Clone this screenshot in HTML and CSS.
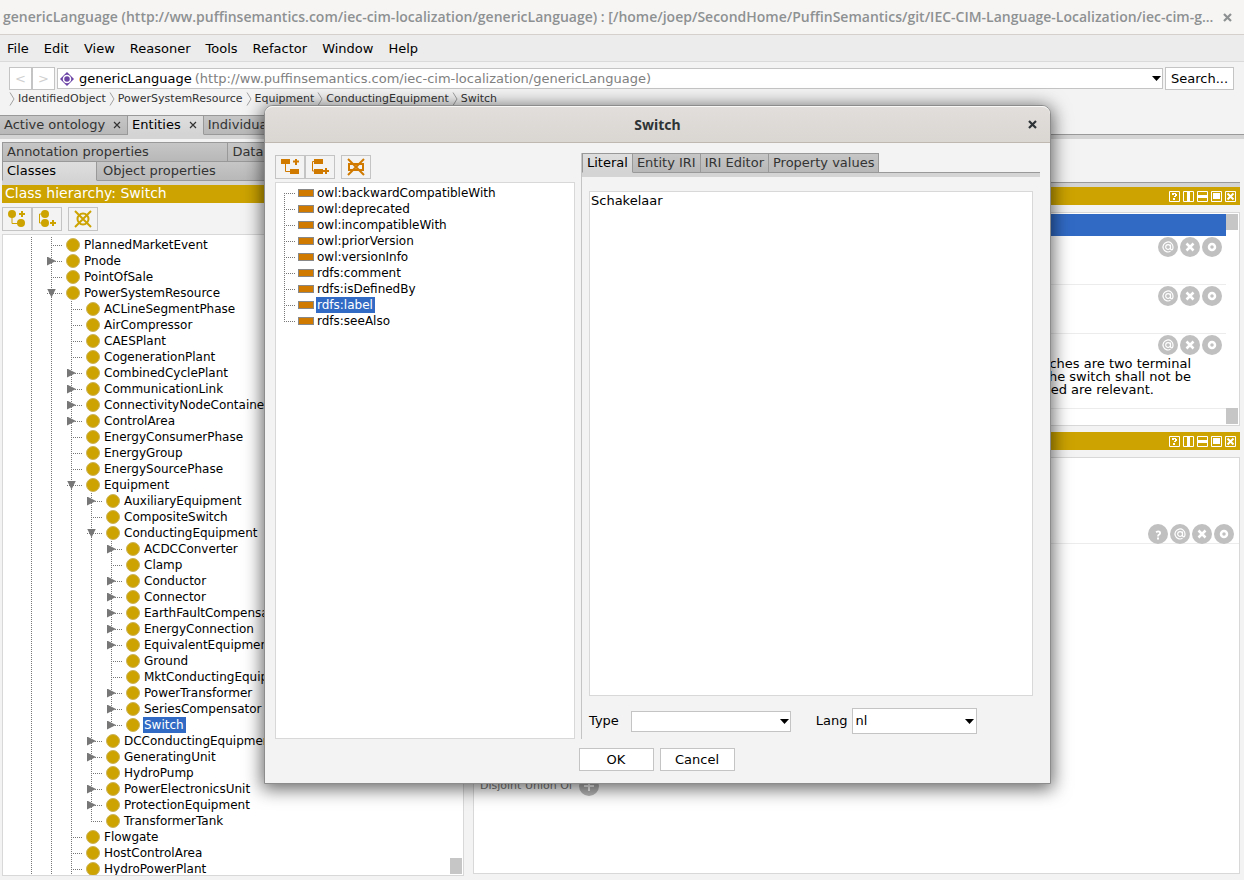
FILE: index.html
```html
<!DOCTYPE html>
<html lang="en">
<head>
    <meta charset="utf-8">
    <title>genericLanguage</title>
    <link rel="stylesheet" href="styles.css">
</head>
<body>
    <!-- shared icons -->
    <svg class="sprite" width="0" height="0">
        <symbol id="help" viewBox="0 0 11 11"><path d="M.5.5h10v10H.5z" fill="none" stroke="#fff"/><path d="M3 2h4v1h1v2H7v1H5V5h1V3H5v1H3zM4 7h2v2H4z" fill="#fff"/></symbol>
        <symbol id="split-v" viewBox="0 0 11 11"><path d="M.5.5h10v10H.5z" fill="none" stroke="#fff"/><path d="M4 0h3v11H4z" fill="#fff"/></symbol>
        <symbol id="split-h" viewBox="0 0 11 11"><path d="M.5.5h10v10H.5z" fill="none" stroke="#fff"/><path d="M0 4h11v3H0z" fill="#fff"/></symbol>
        <symbol id="float" viewBox="0 0 11 11"><path d="M.5.5h10v10H.5z" fill="none" stroke="#fff"/><path d="M2 2h7v6H2z" fill="#fff"/></symbol>
        <symbol id="shut" viewBox="0 0 11 11"><path d="M.5.5h10v10H.5z" fill="none" stroke="#fff"/><path d="M2.500 2.500l6 6M8.500 2.500l-6 6" stroke="#fff" stroke-width="2"/></symbol>
        <symbol id="r-at" viewBox="0 0 20 20"><circle cx="10" cy="10" r="10" fill="#c0c0c0"/><path d="M12.500 7.500v4q0 1.300 1.200 1.300 1.300 0 1.300-2.800A5 5 0 1 0 12.500 14.300M12.500 10a2.400 2.400 0 1 1-4.800 0 2.400 2.400 0 0 1 4.800 0z" fill="none" stroke="#fff" stroke-width="1.200"/></symbol>
        <symbol id="r-x" viewBox="0 0 20 20"><circle cx="10" cy="10" r="10" fill="#c0c0c0"/><path d="M6.500 6.500l7 7M13.500 6.500l-7 7" stroke="#fff" stroke-width="2.500"/></symbol>
        <symbol id="r-o" viewBox="0 0 20 20"><circle cx="10" cy="10" r="10" fill="#c0c0c0"/><circle cx="10" cy="10" r="3" fill="none" stroke="#fff" stroke-width="2.500"/></symbol>
        <symbol id="r-q" viewBox="0 0 20 20"><circle cx="10" cy="10" r="10" fill="#c0c0c0"/><path d="M8 8.200q2.500-1.500 3.800-.2 1 1.700-1 2.800-.8.600-.8 1.700" fill="none" stroke="#fff" stroke-width="1.800"/><path d="M9 13.500h2v2H9z" fill="#fff"/></symbol>
        <symbol id="r-plus" viewBox="0 0 20 20"><circle cx="10" cy="10" r="10" fill="#b8b8b8"/><path d="M10 5v10M5 10h10" stroke="#fff" stroke-width="2"/></symbol>
        <symbol id="chevron" viewBox="0 0 6 14"><path d="M1 .5l4 6.500-4 6.500" fill="none" stroke="#a0a0a0"/></symbol>
        <symbol id="cross" viewBox="0 0 9 9"><path d="M1 1l7 7M8 1L1 8" stroke="currentColor" stroke-width="2.200"/></symbol>
        <symbol id="cross-thin" viewBox="0 0 8 8"><path d="M1 1l6 6M7 1L1 7" stroke="#333" stroke-width="1.200"/></symbol>
    </svg>

    <header class="titlebar">
        <h1>genericLanguage (http://ww.puffinsemantics.com/iec-cim-localization/genericLanguage) : [/home/joep/SecondHome/PuffinSemantics/git/IEC-CIM-Language-Localization/iec-cim-g...</h1>
        <button class="win-close" aria-label="Close window"><svg width="9" height="9"><use href="#cross"/></svg></button>
    </header>

    <nav class="menubar">
        <a href="#">File</a>
        <a href="#">Edit</a>
        <a href="#">View</a>
        <a href="#">Reasoner</a>
        <a href="#">Tools</a>
        <a href="#">Refactor</a>
        <a href="#">Window</a>
        <a href="#">Help</a>
    </nav>

    <div class="location">
        <div class="history">
            <button disabled>&lt;</button>
            <button disabled>&gt;</button>
        </div>
        <button class="ontology">
            <svg width="14" height="14" viewBox="0 0 14 14"><path d="M7 0l7 7-7 7-7-7z" fill="#6a43a5"/><circle cx="7" cy="7" r="3.500" fill="#6a43a5" stroke="#fff" stroke-width="1.500"/></svg>
            <span class="name">genericLanguage</span>
            <span class="iri">(http://ww.puffinsemantics.com/iec-cim-localization/genericLanguage)</span>
            <span class="caret"></span>
        </button>
        <button class="search">Search...</button>
    </div>

    <nav class="breadcrumb">
        <svg width="6" height="14"><use href="#chevron"/></svg><a href="#">IdentifiedObject</a>
        <svg width="6" height="14"><use href="#chevron"/></svg><a href="#">PowerSystemResource</a>
        <svg width="6" height="14"><use href="#chevron"/></svg><a href="#">Equipment</a>
        <svg width="6" height="14"><use href="#chevron"/></svg><a href="#">ConductingEquipment</a>
        <svg width="6" height="14"><use href="#chevron"/></svg><a href="#">Switch</a>
    </nav>

    <div class="tabs main-tabs">
        <button class="tab">Active ontology <svg width="8" height="8"><use href="#cross-thin"/></svg></button>
        <button class="tab active">Entities <svg width="8" height="8"><use href="#cross-thin"/></svg></button>
        <button class="tab">Individuals by class <svg width="8" height="8"><use href="#cross-thin"/></svg></button>
        <span class="rest"></span>
    </div>

    <main class="workspace">
        <section class="hierarchy">
            <div class="tabs wide">
                <button class="tab">Annotation properties</button>
                <button class="tab">Data properties</button>
            </div>
            <div class="tabs second">
                <button class="tab active">Classes</button>
                <button class="tab">Object properties</button>
            </div>
            <h2 class="view-title">Class hierarchy: Switch</h2>
            <div class="tools gold">
                <button aria-label="Add subclass"><svg width="20" height="20" viewBox="0 0 20 20"><circle cx="5" cy="5" r="4"/><circle cx="14" cy="14" r="4"/><path d="M5 8v6.500h6" class="thin"/><path d="M12 5h6M15 2v6" class="thick"/></svg></button>
                <button aria-label="Add sibling class"><svg width="20" height="20" viewBox="0 0 20 20"><circle cx="8" cy="5" r="4"/><circle cx="8" cy="14" r="4"/><path d="M6 5H2.500v9H6" class="thin"/><path d="M13 14h6M16 11v6" class="thick"/></svg></button>
                <button class="apart" aria-label="Delete class"><svg width="20" height="20" viewBox="0 0 20 20"><circle cx="10" cy="10" r="5.500" class="thick"/><path d="M2 2l16 16M18 2L2 18" class="mid"/></svg></button>
            </div>
            <div class="tree">
                <ul class="more">
                    <li>
                        <ul class="more">
                            <li><div class="row"><span class="leaf"></span><i></i><span>PlannedMarketEvent</span></div></li>
                            <li><div class="row"><button class="shut" aria-label="Expand"></button><i></i><span>Pnode</span></div></li>
                            <li><div class="row"><span class="leaf"></span><i></i><span>PointOfSale</span></div></li>
                            <li><div class="row"><button class="open" aria-label="Collapse"></button><i></i><span>PowerSystemResource</span></div>
                                <ul class="more">
                                    <li><div class="row"><span class="leaf"></span><i></i><span>ACLineSegmentPhase</span></div></li>
                                    <li><div class="row"><span class="leaf"></span><i></i><span>AirCompressor</span></div></li>
                                    <li><div class="row"><span class="leaf"></span><i></i><span>CAESPlant</span></div></li>
                                    <li><div class="row"><span class="leaf"></span><i></i><span>CogenerationPlant</span></div></li>
                                    <li><div class="row"><button class="shut" aria-label="Expand"></button><i></i><span>CombinedCyclePlant</span></div></li>
                                    <li><div class="row"><button class="shut" aria-label="Expand"></button><i></i><span>CommunicationLink</span></div></li>
                                    <li><div class="row"><button class="shut" aria-label="Expand"></button><i></i><span>ConnectivityNodeContainer</span></div></li>
                                    <li><div class="row"><button class="shut" aria-label="Expand"></button><i></i><span>ControlArea</span></div></li>
                                    <li><div class="row"><span class="leaf"></span><i></i><span>EnergyConsumerPhase</span></div></li>
                                    <li><div class="row"><span class="leaf"></span><i></i><span>EnergyGroup</span></div></li>
                                    <li><div class="row"><span class="leaf"></span><i></i><span>EnergySourcePhase</span></div></li>
                                    <li><div class="row"><button class="open" aria-label="Collapse"></button><i></i><span>Equipment</span></div>
                                        <ul>
                                            <li><div class="row"><button class="shut" aria-label="Expand"></button><i></i><span>AuxiliaryEquipment</span></div></li>
                                            <li><div class="row"><span class="leaf"></span><i></i><span>CompositeSwitch</span></div></li>
                                            <li><div class="row"><button class="open" aria-label="Collapse"></button><i></i><span>ConductingEquipment</span></div>
                                                <ul>
                                                    <li><div class="row"><button class="shut" aria-label="Expand"></button><i></i><span>ACDCConverter</span></div></li>
                                                    <li><div class="row"><span class="leaf"></span><i></i><span>Clamp</span></div></li>
                                                    <li><div class="row"><button class="shut" aria-label="Expand"></button><i></i><span>Conductor</span></div></li>
                                                    <li><div class="row"><button class="shut" aria-label="Expand"></button><i></i><span>Connector</span></div></li>
                                                    <li><div class="row"><button class="shut" aria-label="Expand"></button><i></i><span>EarthFaultCompensator</span></div></li>
                                                    <li><div class="row"><button class="shut" aria-label="Expand"></button><i></i><span>EnergyConnection</span></div></li>
                                                    <li><div class="row"><button class="shut" aria-label="Expand"></button><i></i><span>EquivalentEquipment</span></div></li>
                                                    <li><div class="row"><span class="leaf"></span><i></i><span>Ground</span></div></li>
                                                    <li><div class="row"><span class="leaf"></span><i></i><span>MktConductingEquipment</span></div></li>
                                                    <li><div class="row"><button class="shut" aria-label="Expand"></button><i></i><span>PowerTransformer</span></div></li>
                                                    <li><div class="row"><button class="shut" aria-label="Expand"></button><i></i><span>SeriesCompensator</span></div></li>
                                                    <li><div class="row"><button class="shut" aria-label="Expand"></button><i></i><span class="selected">Switch</span></div></li>
                                                </ul>
                                            </li>
                                            <li><div class="row"><button class="shut" aria-label="Expand"></button><i></i><span>DCConductingEquipment</span></div></li>
                                            <li><div class="row"><button class="shut" aria-label="Expand"></button><i></i><span>GeneratingUnit</span></div></li>
                                            <li><div class="row"><span class="leaf"></span><i></i><span>HydroPump</span></div></li>
                                            <li><div class="row"><button class="shut" aria-label="Expand"></button><i></i><span>PowerElectronicsUnit</span></div></li>
                                            <li><div class="row"><button class="shut" aria-label="Expand"></button><i></i><span>ProtectionEquipment</span></div></li>
                                            <li><div class="row"><span class="leaf"></span><i></i><span>TransformerTank</span></div></li>
                                        </ul>
                                    </li>
                                    <li><div class="row"><span class="leaf"></span><i></i><span>Flowgate</span></div></li>
                                    <li><div class="row"><span class="leaf"></span><i></i><span>HostControlArea</span></div></li>
                                    <li><div class="row"><span class="leaf"></span><i></i><span>HydroPowerPlant</span></div></li>
                                </ul>
                            </li>
                        </ul>
                    </li>
                </ul>
                <div class="scroll"><b></b></div>
            </div>
        </section>

        <section class="details">
            <div class="strip"></div>
            <div class="view-title">
                <div class="view-buttons">
                    <svg width="11" height="11"><use href="#help"/></svg>
                    <svg width="11" height="11"><use href="#split-v"/></svg>
                    <svg width="11" height="11"><use href="#split-h"/></svg>
                    <svg width="11" height="11"><use href="#float"/></svg>
                    <svg width="11" height="11"><use href="#shut"/></svg>
                </div>
            </div>
            <div class="box annotations">
                <div class="items">
                    <div class="band"></div>
                    <div class="item">
                        <div class="round"><svg><use href="#r-at"/></svg><svg><use href="#r-x"/></svg><svg><use href="#r-o"/></svg></div>
                    </div>
                    <div class="item">
                        <div class="round"><svg><use href="#r-at"/></svg><svg><use href="#r-x"/></svg><svg><use href="#r-o"/></svg></div>
                    </div>
                    <div class="item tall">
                        <div class="round"><svg><use href="#r-at"/></svg><svg><use href="#r-x"/></svg><svg><use href="#r-o"/></svg></div>
                        <p>one or more electric circuits. All switches are two terminal<br>at the two sides of the switch shall not be<br><span>only Switch.open and locked are relevant.</span></p>
                    </div>
                </div>
                <div class="scroll"><b></b><b></b></div>
            </div>
            <div class="view-title">
                <div class="view-buttons">
                    <svg width="11" height="11"><use href="#help"/></svg>
                    <svg width="11" height="11"><use href="#split-v"/></svg>
                    <svg width="11" height="11"><use href="#split-h"/></svg>
                    <svg width="11" height="11"><use href="#float"/></svg>
                    <svg width="11" height="11"><use href="#shut"/></svg>
                </div>
            </div>
            <div class="box description">
                <div class="axiom">
                    <div class="round"><svg><use href="#r-q"/></svg><svg><use href="#r-at"/></svg><svg><use href="#r-x"/></svg><svg><use href="#r-o"/></svg></div>
                </div>
                <div class="section">Disjoint Union Of <svg><use href="#r-plus"/></svg></div>
            </div>
        </section>
    </main>

    <div class="dialog" role="dialog" aria-labelledby="dialogTitle">
        <div class="dialog-bar">
            <h2 id="dialogTitle">Switch</h2>
            <button class="win-close" aria-label="Close"><svg width="9" height="9"><use href="#cross"/></svg></button>
        </div>
        <div class="dialog-body">
            <div class="properties">
                <div class="tools orange">
                    <button aria-label="Add sub property"><svg width="20" height="20" viewBox="0 0 20 20"><path d="M1 2h9v5H1zM10 12h9v5h-9z"/><path d="M5.500 7v7.500H10" class="thin"/><path d="M13 4.500h6M16 2v6" class="thick"/></svg></button>
                    <button aria-label="Add sibling property"><svg width="20" height="20" viewBox="0 0 20 20"><path d="M4 2h9v5H4zM4 12h9v5H4z"/><path d="M4 4.500H2.500v9.500H4" class="thin"/><path d="M13 14h6M16 11v6" class="thick"/></svg></button>
                    <button class="apart" aria-label="Delete property"><svg width="20" height="20" viewBox="0 0 20 20"><path d="M3 7h14v6H3z" class="thick"/><path d="M2 2l16 16M18 2L2 18" class="mid"/></svg></button>
                </div>
                <div class="tree">
                    <ul>
                        <li><div class="row"><span class="leaf"></span><i></i><span>owl:backwardCompatibleWith</span></div></li>
                        <li><div class="row"><span class="leaf"></span><i></i><span>owl:deprecated</span></div></li>
                        <li><div class="row"><span class="leaf"></span><i></i><span>owl:incompatibleWith</span></div></li>
                        <li><div class="row"><span class="leaf"></span><i></i><span>owl:priorVersion</span></div></li>
                        <li><div class="row"><span class="leaf"></span><i></i><span>owl:versionInfo</span></div></li>
                        <li><div class="row"><span class="leaf"></span><i></i><span>rdfs:comment</span></div></li>
                        <li><div class="row"><span class="leaf"></span><i></i><span>rdfs:isDefinedBy</span></div></li>
                        <li><div class="row"><span class="leaf"></span><i></i><span class="selected">rdfs:label</span></div></li>
                        <li><div class="row"><span class="leaf"></span><i></i><span>rdfs:seeAlso</span></div></li>
                    </ul>
                </div>
            </div>
            <div class="value">
                <div class="tabs">
                    <button class="tab active">Literal</button>
                    <button class="tab">Entity IRI</button>
                    <button class="tab">IRI Editor</button>
                    <button class="tab">Property values</button>
                    <span class="rest"></span>
                </div>
                <textarea aria-label="Literal value">Schakelaar</textarea>
                <div class="fields">
                    <label for="type">Type</label>
                    <select id="type"><option></option></select>
                    <label for="lang">Lang</label>
                    <select id="lang" class="lang"><option>nl</option></select>
                </div>
            </div>
        </div>
        <div class="actions">
            <button>OK</button>
            <button>Cancel</button>
        </div>
    </div>
</body>
</html>
```

FILE: styles.css
```css
* {
    box-sizing: border-box;
}

body {
    margin: 0;
    height: 100vh;
    overflow: hidden;
    display: flex;
    flex-direction: column;
    background: #f3f3f3;
    color: #000;
    font: 13px/16px "DejaVu Sans", sans-serif;
}

button, select, textarea {
    font: inherit;
    color: inherit;
    border-radius: 0;
}

button {
    background: #fff;
    border: 1px solid #c4c4c4;
    padding: 0;
}

a {
    color: inherit;
    text-decoration: none;
}

svg {
    display: block;
    flex: none;
}

h1, h2, p, ul {
    margin: 0;
    padding: 0;
}

.sprite {
    position: absolute;
}

/* window title */
.titlebar {
    display: flex;
    align-items: center;
    height: 35px;
    padding: 0 12px 0 3px;
    background: #f6f5f4;
    border-bottom: 1px solid #d5d0cb;
    color: #8e9192;
}

.titlebar h1 {
    flex: 1;
    min-width: 0;
    font: 600 14px/20px "Open Sans", "Noto Sans", sans-serif;
    white-space: nowrap;
}

.win-close {
    border: 0;
    background: none;
}

.menubar {
    display: flex;
    gap: 15px;
    height: 27px;
    padding: 6px 7px;
    background: #ececec;
    border-bottom: 1px solid #dadada;
}

/* ontology location */
.location {
    display: flex;
    gap: 2px;
    padding: 5px 10px 0 9px;
}

.history {
    display: flex;
}

.history button {
    width: 23px;
    height: 23px;
    color: #d0d0d0;
}

.ontology {
    flex: 1;
    display: flex;
    align-items: center;
    height: 21px;
    margin-top: 1px;
    padding: 0 1px 0 2px;
}

.ontology .name {
    margin: 0 3px 0 5px;
}

.ontology .iri {
    color: #808080;
}

.caret {
    width: 9px;
    height: 5px;
    margin-left: auto;
    background: #000;
    clip-path: polygon(0 0, 100% 0, 50% 100%);
}

.search {
    width: 69px;
    height: 23px;
}

.breadcrumb {
    display: flex;
    align-items: center;
    gap: 3px;
    height: 16px;
    padding: 1px 0 0 9px;
    font-size: 11px;
    color: #333;
}

/* tabs */
.tabs {
    display: flex;
}

.tab {
    display: flex;
    align-items: center;
    height: 20px;
    padding: 0 4px;
    border: 1px solid #999;
    border-left-width: 0;
    background: linear-gradient(#c6c6c6, #b8b8b8);
    color: #333;
    white-space: nowrap;
}

.tab:first-child {
    border-left-width: 1px;
}

.tab svg {
    margin-left: 8px;
}

.tab.active {
    background: linear-gradient(#dedede, #d4d4d4);
    border-bottom-color: #d4d4d4;
    color: #000;
}

.tabs .rest {
    flex: 1;
    border-bottom: 1px solid #999;
}

.main-tabs {
    margin-top: 9px;
    border-bottom: 4px solid #d4d4d4;
}

.main-tabs .tab {
    padding-right: 6px;
}

.main-tabs .tab:first-child {
    border-left: 0;
}

/* workspace */
.workspace {
    flex: 1;
    min-height: 0;
    display: grid;
    grid-template-columns: 462fr 767fr;
    gap: 9px;
    padding: 3px 4px 4px 2px;
}

.hierarchy, .details {
    display: flex;
    flex-direction: column;
    min-width: 0;
    min-height: 0;
}

.wide .tab {
    width: 49%;
    height: 19px;
    border-bottom: 0;
}

.wide .tab:last-child {
    flex: 1;
}

.second {
    border-bottom: 4px solid #d4d4d4;
}

.second .tab {
    width: 95px;
    padding: 0 4px;
}

.second .tab:last-child {
    flex: 1;
    padding: 0 6px;
}

.view-title {
    flex: none;
    height: 18px;
    padding: 0 3px;
    background: #cca300;
    color: #fff;
    font-size: 14px;
    line-height: 17px;
    font-weight: normal;
}

.tools {
    display: flex;
    padding: 4px 0 3px;
}

.tools button {
    width: 30px;
    height: 24px;
    padding: 1px 4px;
    background: #f3f3f3;
}

.tools .apart {
    margin-left: 6px;
}

.tools svg {
    fill: currentColor;
    stroke: currentColor;
    stroke-width: 0;
}

.tools .thin, .tools .mid, .tools .thick {
    fill: none;
    stroke-width: 1;
}

.tools .mid, .tools .thick {
    stroke-width: 2;
}

.gold {
    color: #cca300;
}

.orange {
    color: #d17a00;
}

/* tree */
.tree {
    flex: 1;
    min-height: 0;
    overflow: hidden;
    display: flex;
    background: #fff;
    border: 1px solid #d8d8d8;
    font-size: 12px;
}

.tree > ul {
    flex: 1;
    padding-top: 2px;
}

.tree ul {
    list-style: none;
}

.tree li {
    background: repeating-linear-gradient(#777 0 1px, transparent 1px 2px) 0 0 / 1px 100% no-repeat;
}

.tree li:last-child {
    background-size: 1px 9px;
}

.tree .more > li:last-child {
    background-size: 1px 100%;
}

.tree li ul {
    margin-left: 20px;
}

.hierarchy .tree > ul {
    padding-left: 28px;
}

.row {
    display: flex;
    align-items: center;
    height: 16px;
    white-space: nowrap;
}

.row .leaf, .row button {
    flex: none;
    width: 12px;
    height: 16px;
    background: repeating-linear-gradient(90deg, #777 0 1px, transparent 1px 2px) 0 8px / 100% 1px no-repeat;
}

.row button {
    width: 16px;
    margin-left: -4px;
    border: 0;
}

.row button::before {
    content: "";
    display: block;
    width: 9px;
    height: 9px;
    background: #777;
    clip-path: polygon(0 0, 100% 50%, 0 100%);
}

.row button.open::before {
    clip-path: polygon(0 0, 100% 0, 50% 100%);
}

.row i {
    flex: none;
    width: 14px;
    height: 14px;
    margin: 0 3px;
    border: 1px solid #ccb45a;
    border-radius: 50%;
    background: #cca300;
}

.row span:last-child {
    padding: 0 2px 0 1px;
}

.row .selected {
    background: #316ac5;
    color: #fff;
}

.scroll {
    display: flex;
    flex-direction: column;
    justify-content: space-between;
    width: 12px;
    padding: 1px 0;
}

.scroll b {
    height: 16px;
    background: #c6c6c6;
}

.hierarchy .scroll {
    justify-content: flex-end;
    margin-right: 1px;
}

/* right side */
.details {
    padding-bottom: 2px;
}

.strip {
    flex: none;
    height: 5px;
    margin-top: 40px;
    border-top: 1px solid #999;
    background: #d4d4d4;
}

.view-buttons {
    display: flex;
    justify-content: flex-end;
    gap: 3px;
    padding-top: 4px;
}

.details .view-title {
    padding-right: 4px;
}

.box {
    background: #fff;
    border: 1px solid #d8d8d8;
}

.annotations {
    display: flex;
    height: 214px;
    margin: 7px 0 6px;
    padding-right: 1px;
}

.items {
    flex: 1;
    min-width: 0;
}

.band {
    height: 22px;
    margin-top: 1px;
    background: #316ac5;
}

.item {
    height: 49px;
    padding-top: 1px;
    border-bottom: 1px solid #ececec;
}

.item.tall {
    height: 75px;
}

.item p {
    margin-top: 2px;
    padding-right: 35px;
    line-height: 13px;
    text-align: right;
}

.item p span {
    margin-right: 37px;
}

.round {
    display: flex;
    justify-content: flex-end;
    gap: 2px;
    padding-right: 4px;
}

.round svg, .section svg {
    width: 20px;
    height: 20px;
}

.description {
    flex: 1;
    min-height: 0;
    margin-top: 7px;
}

.axiom {
    height: 86px;
    padding: 66px 1px 0;
    border-bottom: 1px solid #ececec;
}

.section {
    display: flex;
    align-items: center;
    gap: 6px;
    margin-top: 232px;
    padding-left: 6px;
    font-size: 11px;
    color: #777;
}

/* dialog window */
.dialog {
    position: absolute;
    left: 264px;
    top: 105px;
    width: 787px;
    height: 679px;
    display: flex;
    flex-direction: column;
    background: #f3f3f3;
    border: 1px solid #8c8c8c;
    border-radius: 9px 9px 0 0;
    box-shadow: 0 3px 18px 2px rgba(0, 0, 0, 0.6);
}

.dialog-bar {
    display: flex;
    align-items: center;
    height: 37px;
    padding: 0 13px 0 22px;
    border-top: 1px solid #f9f8f7;
    border-bottom: 1px solid #bfb8b1;
    border-radius: 8px 8px 0 0;
    background: linear-gradient(#e1dedb, #dad6d2);
    color: #2e3436;
}

.dialog-bar h2 {
    flex: 1;
    font: bold 14px/20px "Noto Sans", sans-serif;
    text-align: center;
}

.dialog-body {
    flex: 1;
    min-height: 0;
    display: grid;
    grid-template-columns: 300px 1fr;
    gap: 6px;
    padding: 10px 10px 0;
}

.properties {
    display: flex;
    flex-direction: column;
    padding-top: 2px;
}

.properties .tools {
    padding: 0 0 3px;
}

.properties .tree > ul {
    padding-left: 8px;
}

.properties .tree li:first-child {
    background-position: 0 8px;
}

.properties .row i {
    width: 16px;
    height: 8px;
    margin: 0 2px;
    border: 1px solid #888;
    border-radius: 0;
    background: #d17a00;
}

.value {
    display: flex;
    flex-direction: column;
    border-left: 1px solid #c4c4c4;
}

.value .tabs {
    border-bottom: 4px solid #d4d4d4;
}

.value textarea {
    flex: 1;
    margin: 14px 7px 0;
    padding: 1px;
    border: 1px solid #d8d8d8;
    outline: 0;
    resize: none;
}

.fields {
    display: flex;
    align-items: center;
    padding: 12px 0 5px 7px;
}

.fields select {
    width: 160px;
    height: 21px;
    margin: 0 25px 0 12px;
    padding: 0 3px;
    appearance: none;
    border: 1px solid #c4c4c4;
    background: #fff url("data:image/svg+xml,%3Csvg xmlns='http://www.w3.org/2000/svg' width='9' height='5'%3E%3Cpath d='M0 0h9L4.5 5z'/%3E%3C/svg%3E") right 1px center no-repeat;
}

.fields .lang {
    width: 125px;
    height: 26px;
    margin: 0 0 0 4px;
    background-position: right 2px center;
}

.actions {
    display: flex;
    justify-content: center;
    gap: 6px;
    padding: 9px 2px 12px 0;
}

.actions button {
    width: 75px;
    height: 23px;
}
```
